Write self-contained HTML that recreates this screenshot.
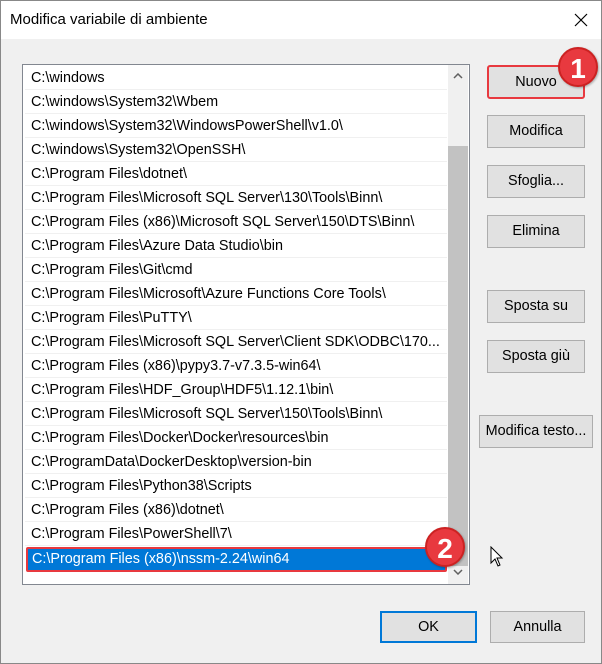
<!DOCTYPE html>
<html><head><meta charset="utf-8"><style>
*{box-sizing:border-box;margin:0;padding:0}
body{width:602px;height:664px;background:#f0f0f0;font-family:"Liberation Sans",sans-serif;font-size:14px;color:#000;position:relative;overflow:hidden;border:1px solid #888}
.title{position:absolute;left:0;top:0;width:600px;height:38px;background:#fff}
.title span{position:absolute;left:9px;top:10px;font-size:15px}
.x{position:absolute;left:572px;top:11px;width:16px;height:16px}
.list{position:absolute;left:21px;top:63px;width:448px;height:521px;background:#fff;border:1px solid #828790}
.row{position:absolute;left:2px;width:422px;height:24px;border-bottom:1px solid #f0f0f0;padding-left:6px;line-height:24px;white-space:nowrap;overflow:hidden;font-size:14.4px}
.sb{position:absolute;left:425px;top:0;width:20px;height:519px;background:#f0f0f0}
.thumb{position:absolute;left:0;top:81px;width:20px;height:420px;background:#c2c2c2}
.btn{position:absolute;background:#e1e1e1;border:1px solid #adadad;text-align:center;font-size:14.4px}
.badge{position:absolute;width:40px;height:40px;border-radius:50%;background:#e8393f;color:#fff;font-weight:bold;font-size:28px;text-align:center;line-height:40px;border:2px solid #c22;box-shadow:1px 1px 2px rgba(0,0,0,.3)}
</style></head><body>
<div class="title"><span>Modifica variabile di ambiente</span>
<svg class="x" viewBox="0 0 16 16"><path d="M2 2L14 14M14 2L2 14" stroke="#000" stroke-width="1.2"/></svg></div>
<div class="list">
<div class="row" style="top:1px">C:\windows</div>
<div class="row" style="top:25px">C:\windows\System32\Wbem</div>
<div class="row" style="top:49px">C:\windows\System32\WindowsPowerShell\v1.0\</div>
<div class="row" style="top:73px">C:\windows\System32\OpenSSH\</div>
<div class="row" style="top:97px">C:\Program Files\dotnet\</div>
<div class="row" style="top:121px">C:\Program Files\Microsoft SQL Server\130\Tools\Binn\</div>
<div class="row" style="top:145px">C:\Program Files (x86)\Microsoft SQL Server\150\DTS\Binn\</div>
<div class="row" style="top:169px">C:\Program Files\Azure Data Studio\bin</div>
<div class="row" style="top:193px">C:\Program Files\Git\cmd</div>
<div class="row" style="top:217px">C:\Program Files\Microsoft\Azure Functions Core Tools\</div>
<div class="row" style="top:241px">C:\Program Files\PuTTY\</div>
<div class="row" style="top:265px">C:\Program Files\Microsoft SQL Server\Client SDK\ODBC\170...</div>
<div class="row" style="top:289px">C:\Program Files (x86)\pypy3.7-v7.3.5-win64\</div>
<div class="row" style="top:313px">C:\Program Files\HDF_Group\HDF5\1.12.1\bin\</div>
<div class="row" style="top:337px">C:\Program Files\Microsoft SQL Server\150\Tools\Binn\</div>
<div class="row" style="top:361px">C:\Program Files\Docker\Docker\resources\bin</div>
<div class="row" style="top:385px">C:\ProgramData\DockerDesktop\version-bin</div>
<div class="row" style="top:409px">C:\Program Files\Python38\Scripts</div>
<div class="row" style="top:433px">C:\Program Files (x86)\dotnet\</div>
<div class="row" style="top:457px">C:\Program Files\PowerShell\7\</div>
<div class="row" style="top:482px;left:3px;height:25px;width:421px;background:#0078d7;color:#fff;border:2px solid #e8393f;border-radius:2px;line-height:21px;padding-left:4px">C:\Program Files (x86)\nssm-2.24\win64</div>
<div class="sb"><div class="thumb"></div>
<svg style="position:absolute;left:5px;top:8px" width="10" height="6"><path d="M1 5L5 1L9 5" stroke="#606060" fill="none" stroke-width="1.5"/></svg>
<svg style="position:absolute;left:5px;top:504px" width="10" height="6"><path d="M1 1L5 5L9 1" stroke="#606060" fill="none" stroke-width="1.5"/></svg></div>
</div>
<div class="btn" style="left:486px;top:64px;width:98px;height:34px;border:2px solid #e8393f;border-radius:3px;line-height:30px">Nuovo</div>
<div class="btn" style="left:486px;top:114px;width:98px;height:33px;line-height:31px">Modifica</div>
<div class="btn" style="left:486px;top:164px;width:98px;height:33px;line-height:31px">Sfoglia...</div>
<div class="btn" style="left:486px;top:214px;width:98px;height:33px;line-height:31px">Elimina</div>
<div class="btn" style="left:486px;top:289px;width:98px;height:33px;line-height:31px">Sposta su</div>
<div class="btn" style="left:486px;top:339px;width:98px;height:33px;line-height:31px">Sposta giù</div>
<div class="btn" style="left:478px;top:414px;width:114px;height:33px;line-height:31px">Modifica testo...</div>
<div class="btn" style="left:379px;top:610px;width:97px;height:32px;line-height:28px;border:2px solid #0078d7">OK</div>
<div class="btn" style="left:489px;top:610px;width:95px;height:32px;line-height:30px">Annulla</div>
<div class="badge" style="left:557px;top:46px">1</div>
<div class="badge" style="left:424px;top:526px">2</div>
<svg style="position:absolute;left:489px;top:545px" width="14" height="22"><path d="M1 1L1 17L5 13L8 20L10 19L7 12L12 12Z" fill="#fff" stroke="#000" stroke-width="1"/></svg>
</body></html>
